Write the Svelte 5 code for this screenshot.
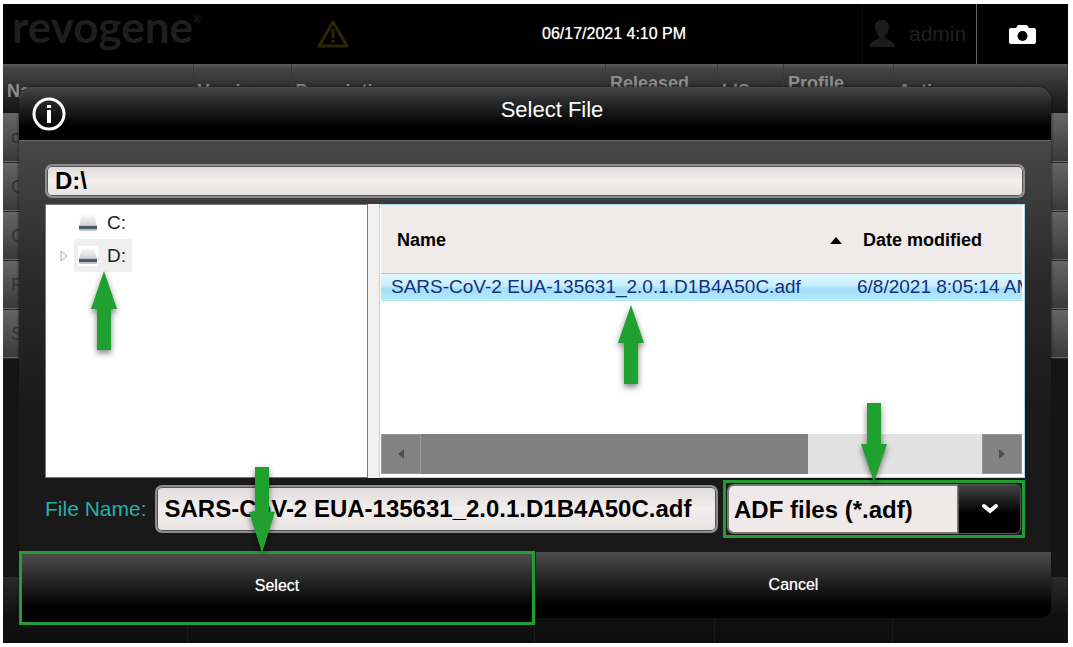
<script>
  const assays = ['c', 'O', 'C', 'F', 'S'];
  const drives = [
    { name: 'C:', active: false },
    { name: 'D:', active: true },
  ];
  const files = [
    { name: 'SARS-CoV-2 EUA-135631_2.0.1.D1B4A50C.adf', date: '6/8/2021 8:05:14 AM' },
  ];

  let path = 'D:\\';
  let fileName = files[0].name;
  let filter = 'adf';
  let thumb = 69;
</script>

{#snippet arrow(place)}
  <svg class="arrow {place}" viewBox="0 0 26 79" preserveAspectRatio="none" aria-hidden="true">
    <path d="M13 0 L26 38 H20 V79 H6 V38 H0 Z" fill="#1fa02f" />
  </svg>
{/snippet}

<div class="screen">
  <header class="topbar">
    <div class="logo">revogene<sup>®</sup></div>
    <svg class="warning" viewBox="0 0 34 30" aria-hidden="true">
      <path d="M17 3 L31 27 H3 Z" fill="none" stroke="#2b2706" stroke-width="3" stroke-linejoin="round" />
      <path d="M17 10 V19 M17 21 V24" stroke="#2b2706" stroke-width="3" />
    </svg>
    <div class="clock">06/17/2021 4:10 PM</div>
    <div class="user">
      <svg viewBox="0 0 26 28" width="26" height="28" aria-hidden="true">
        <path d="M13 0 C17 0 20 2 20 7 C20 11 18 14 16 16 V18 L22 21 Q25 23 26 27 H0 Q1 23 4 21 L10 18 V16 C8 14 6 11 6 7 C6 2 9 0 13 0 Z" fill="#1c1c1c" />
      </svg>
      admin
    </div>
    <button class="camera" aria-label="Screenshot">
      <svg viewBox="0 0 27 19" width="27" height="19">
        <path d="M2 3 H7 L9 0 H18 L20 3 H25 Q27 3 27 5 V17 Q27 19 25 19 H2 Q0 19 0 17 V5 Q0 3 2 3 Z" fill="#fff" />
        <circle cx="13.5" cy="11" r="5" fill="#000" />
      </svg>
    </button>
  </header>

  <table class="assays">
    <colgroup>
      <col class="c-name" /><col class="c-version" /><col /><col class="c-released" />
      <col class="c-lis" /><col class="c-profile" /><col class="c-actions" />
    </colgroup>
    <thead>
      <tr>
        <th>Name</th>
        <th>Version</th>
        <th>Description</th>
        <th class="high">Released</th>
        <th>LIS</th>
        <th class="high">Profile</th>
        <th>Actions</th>
      </tr>
    </thead>
    <tbody>
      {#each assays as assay}
        <tr><td colspan="7">{assay}</td></tr>
      {/each}
    </tbody>
  </table>

  <footer class="toolbar"><i></i><i></i><i></i><i></i><i></i></footer>

  <div class="overlay">
    <div class="dialog" role="dialog" aria-labelledby="title">
      <div class="title">
        <svg class="info" viewBox="0 0 34 34" aria-hidden="true">
          <circle cx="17" cy="17" r="15" fill="none" stroke="#fff" stroke-width="3" />
          <path d="M17 13 V26" stroke="#fff" stroke-width="4" />
          <path d="M17 8 V11" stroke="#fff" stroke-width="4" />
        </svg>
        <h1 id="title">Select File</h1>
      </div>

      <div class="content">
        <input class="field path" aria-label="Path" bind:value={path} />

        <div class="panes">
          <ul class="tree">
            {#each drives as drive}
              <li>
                <svg class="expander" viewBox="0 0 8 12" aria-hidden="true">
                  {#if drive.active}
                    <path d="M1 1 L7 6 L1 11 Z" fill="none" stroke="#a8a8a8" />
                  {/if}
                </svg>
                <button class="drive" class:active={drive.active}>
                  <svg viewBox="0 0 20 20" width="20" height="20" aria-hidden="true">
                    <defs>
                      <linearGradient id="disk" x1="0" y1="0" x2="0" y2="1">
                        <stop offset="0" stop-color="#fbfbfb" />
                        <stop offset="1" stop-color="#cfcfd1" />
                      </linearGradient>
                    </defs>
                    {#if drive.active}
                      <rect width="20" height="20" fill="#fff" />
                    {/if}
                    <path d="M4 2 H16 L19 13 H1 Z" fill="url(#disk)" />
                    <rect x="1" y="12" width="18" height="6" rx="1" fill="#bcc5cd" />
                    <rect x="1" y="13" width="18" height="3" fill="#4b5b66" />
                  </svg>
                  {drive.name}
                </button>
                {#if drive.active}
                  {@render arrow('under-drive')}
                {/if}
              </li>
            {/each}
          </ul>

          <div class="list">
            <table>
              <thead>
                <tr>
                  <th>
                    <span>Name
                      <svg viewBox="0 0 12 7" width="12" height="7" aria-hidden="true"><path d="M6 0 L12 7 H0 Z" /></svg>
                    </span>
                  </th>
                  <th class="date">Date modified</th>
                </tr>
              </thead>
              <tbody>
                {#each files as file}
                  <tr>
                    <td>{file.name}</td>
                    <td>{file.date}</td>
                  </tr>
                {/each}
              </tbody>
            </table>
            {@render arrow('under-file')}
            <div class="scrollbar">
              <button aria-label="Scroll left">
                <svg viewBox="0 0 6 10" width="6" height="10"><path d="M6 0 V10 L0 5 Z" fill="#4f4f4f" /></svg>
              </button>
              <div class="track"><div class="thumb" style="width: {thumb}%"></div></div>
              <button aria-label="Scroll right">
                <svg viewBox="0 0 6 10" width="6" height="10"><path d="M0 0 V10 L6 5 Z" fill="#4f4f4f" /></svg>
              </button>
            </div>
          </div>
        </div>

        <div class="file-row">
          <label for="file-name">File Name:</label>
          <input class="field" id="file-name" bind:value={fileName} />
          <div class="filter">
            <select aria-label="File type" bind:value={filter}>
              <option value="adf">ADF files (*.adf)</option>
            </select>
            <div class="drop">
              <svg viewBox="0 0 18 12" width="18" height="12" aria-hidden="true">
                <path d="M3 3 L9 8 L15 3" fill="none" stroke="#fff" stroke-width="4" stroke-linecap="round" />
              </svg>
            </div>
            {@render arrow('over-filter')}
          </div>
        </div>
      </div>

      <div class="actions">
        <button class="select">Select {@render arrow('over-select')}</button>
        <button class="cancel">Cancel</button>
      </div>
    </div>
  </div>
</div>

<style>
  :global(body) {
    background: #fff;
    font-family: "Liberation Sans", Arial, sans-serif;
  }

  * {
    box-sizing: border-box;
  }

  button, input, select {
    font-family: inherit;
  }

  button {
    border: none;
    padding: 0;
    color: #fff;
    cursor: pointer;
  }

  .screen {
    position: relative;
    display: flex;
    flex-direction: column;
    min-height: calc(100vh - 8px);
    margin: 4px 5px 4px 3px;
    background: #151515;
    overflow: hidden;
  }

  .topbar {
    display: grid;
    grid-template-columns: 313px 34px 1fr 114px 92px;
    align-items: center;
    height: 60px;
    background: #000;
  }

  .logo {
    align-self: start;
    height: 60px;
    padding-left: 9px;
    font-family: Lato, sans-serif;
    font-size: 44px;
    font-weight: 700;
    line-height: 44px;
    color: #1e1e1e;
    white-space: nowrap;
  }

  .logo sup {
    font-size: 10px;
    line-height: 10px;
    vertical-align: 20px;
  }

  .warning {
    width: 34px;
    height: 30px;
  }

  .clock {
    padding-left: 192px;
    font-size: 16px;
    color: #fff;
    text-shadow: 0 0 1px #aaa;
    white-space: nowrap;
  }

  .user {
    display: flex;
    align-items: center;
    gap: 14px;
    height: 60px;
    padding-left: 6px;
    border-left: 1px solid #0e0e0e;
    font-size: 21px;
    color: #212121;
  }

  .camera {
    display: flex;
    align-items: center;
    justify-content: center;
    height: 60px;
    background: #000;
    border-left: 1px solid #666;
  }

  .assays {
    width: 100%;
    table-layout: fixed;
    border-collapse: collapse;
  }

  .c-name { width: 190px; }
  .c-version { width: 98px; }
  .c-released { width: 112px; }
  .c-lis { width: 66px; }
  .c-profile { width: 110px; }
  .c-actions { width: 174px; }

  .assays thead tr {
    height: 49px;
    background: linear-gradient(#5a5a5a 0, #444 5px, #303030 22px, #141414 49px);
  }

  .assays th {
    padding: 4px 4px 0;
    font-size: 18px;
    line-height: 20px;
    text-align: left;
    color: #8c8c8c;
    border-right: 1px solid #383838;
  }

  .assays .high {
    padding-top: 9px;
    vertical-align: top;
  }

  .assays tbody tr {
    height: 49px;
    background: linear-gradient(#666, #3a3a3a);
    border-bottom: 1px solid #2c2c2c;
  }

  .assays td {
    padding: 0 0 0 8px;
    font-size: 19px;
    color: #333;
  }

  .toolbar {
    display: grid;
    grid-template-columns: 185px 1fr 180px 178px 175px;
    height: 66px;
    margin-top: auto;
    background: linear-gradient(#2b2b2b, #101010 40px, #0e0e0e);
  }

  .toolbar i {
    border-right: 1px solid #1b1b1b;
  }

  .overlay {
    position: absolute;
    inset: 0;
    padding: 83px 17px 0 16px;
  }

  .dialog {
    border-radius: 14px 14px 10px 10px;
    background: linear-gradient(#484848 53px, #2a2a2a 190px, #191919 330px);
    box-shadow: 0 0 3px #111;
  }

  .title {
    display: flex;
    align-items: center;
    height: 53px;
    padding: 0 13px;
    border-radius: 14px 14px 0 0;
    background: linear-gradient(#484848, #2a2a2a 14px, #000 40px);
  }

  .info {
    width: 34px;
    height: 34px;
  }

  h1 {
    flex: 1;
    margin: 0;
    padding: 0 0 8px 0;
    font-size: 22px;
    font-weight: 400;
    text-align: center;
    color: #fff;
  }

  .content {
    padding: 23px 26px 14px;
    border-top: 1px solid #666;
  }

  .field {
    display: block;
    width: 100%;
    height: 48px;
    padding: 0 8px;
    font-size: 24px;
    font-weight: 700;
    color: #000;
    background: linear-gradient(#dedbda, #f2eeed 50%, #e6e2e1);
    border: 2px solid #8c8c8c;
    border-radius: 7px;
    box-shadow: inset 0 0 0 1px #555;
  }

  .path {
    height: 34px;
    margin-bottom: 6px;
  }

  .panes {
    display: grid;
    grid-template-columns: 1fr 2fr;
    gap: 11px;
    height: 274px;
    background: #f0f0f0;
  }

  .tree {
    margin: 0;
    padding: 1px 0 0 14px;
    list-style: none;
    background: #fff;
    border: 1px solid #777;
  }

  .tree li {
    position: relative;
    display: flex;
    align-items: center;
    gap: 6px;
    height: 33px;
  }

  .expander {
    width: 8px;
    height: 12px;
  }

  .drive {
    display: flex;
    align-items: center;
    gap: 9px;
    height: 33px;
    padding: 0 6px 0 4px;
    font-size: 19px;
    color: #222;
    background: none;
  }

  .drive.active {
    background: #efefef;
  }

  .list {
    position: relative;
    display: flex;
    flex-direction: column;
    min-width: 0;
    padding: 0 2px 3px 1px;
    background: #fff;
    border: 1px solid #a8dcf4;
  }

  .list table {
    width: 100%;
    table-layout: fixed;
    border-collapse: collapse;
    white-space: nowrap;
  }

  .list th {
    height: 68px;
    padding: 3px 0 0 16px;
    font-size: 18px;
    text-align: left;
    background: #f0eaea;
  }

  .list .date {
    width: 175px;
  }

  .list th span {
    display: flex;
    align-items: center;
    justify-content: space-between;
    padding-right: 5px;
  }

  .list td {
    height: 27px;
    padding: 0 0 0 10px;
    overflow: hidden;
    font-size: 19px;
    line-height: 24px;
    color: #14307e;
    background: linear-gradient(#e4f7fe, #c8eefc 45%, #a2dffa 60%, #b4e8fb);
    border-top: 1px solid #8ed6ee;
    border-bottom: 1px solid #a6e0f2;
  }

  .scrollbar {
    display: flex;
    height: 40px;
    margin-top: auto;
  }

  .scrollbar button {
    display: flex;
    align-items: center;
    justify-content: center;
    width: 40px;
    background: #838383;
    border: 1px solid #989898;
  }

  .track {
    flex: 1;
    background: #e2e2e2;
  }

  .thumb {
    height: 100%;
    background: #808080;
  }

  .file-row {
    display: flex;
    align-items: center;
    margin-top: 2px;
  }

  .file-row label {
    padding-right: 8px;
    font-size: 21px;
    color: #25b0b0;
    white-space: nowrap;
  }

  .file-row .field {
    flex: 1;
    min-width: 0;
  }

  .filter {
    position: relative;
    display: flex;
    flex: 0 0 302px;
    height: 58px;
    margin-left: 5px;
    padding: 1px;
    border: 3px solid #259b34;
  }

  .filter select {
    flex: 1;
    min-width: 0;
    padding: 0 5px;
    appearance: none;
    font-size: 24px;
    font-weight: 700;
    color: #000;
    background: #efeae9;
    border: 2px solid #777;
    border-right-width: 1px;
    border-radius: 7px 0 0 7px;
  }

  .drop {
    display: flex;
    align-items: center;
    justify-content: center;
    width: 63px;
    background: linear-gradient(#444, #000 60%);
    border: 1px solid #555;
    border-radius: 0 6px 6px 0;
    pointer-events: none;
  }

  .actions {
    display: grid;
    grid-template-columns: 1fr 1fr;
    gap: 2px;
    align-items: start;
    height: 66px;
  }

  .actions button {
    position: relative;
    height: 66px;
    font-size: 16px;
    text-shadow: 0 0 1px #aaa;
    background: linear-gradient(#4c4c4c, #2c2c2c 22px, #000 54px);
  }

  .actions .select {
    height: 74px;
    margin: -1px -1px 0 0;
    padding-bottom: 5px;
    border: 3px solid #259b34;
  }

  .actions .cancel {
    border-radius: 0 0 10px 0;
  }

  /* callout arrows lying over the dialog */
  .arrow {
    position: absolute;
    z-index: 2;
    width: 26px;
    height: 79px;
    filter: drop-shadow(0 3px 3px rgba(0, 0, 0, 0.5));
    pointer-events: none;
  }

  .under-drive {
    top: 32px;
    left: 31px;
  }

  .under-file {
    top: 100px;
    left: 37%;
  }

  .over-filter,
  .over-select {
    transform: rotate(180deg);
    filter: drop-shadow(0 -3px 3px rgba(0, 0, 0, 0.5));
  }

  .over-filter {
    bottom: 53px;
    left: 50%;
    margin-left: -13px;
  }

  .over-select {
    bottom: 69px;
    left: 47%;
    height: 86px;
    margin-left: -13px;
  }
</style>
